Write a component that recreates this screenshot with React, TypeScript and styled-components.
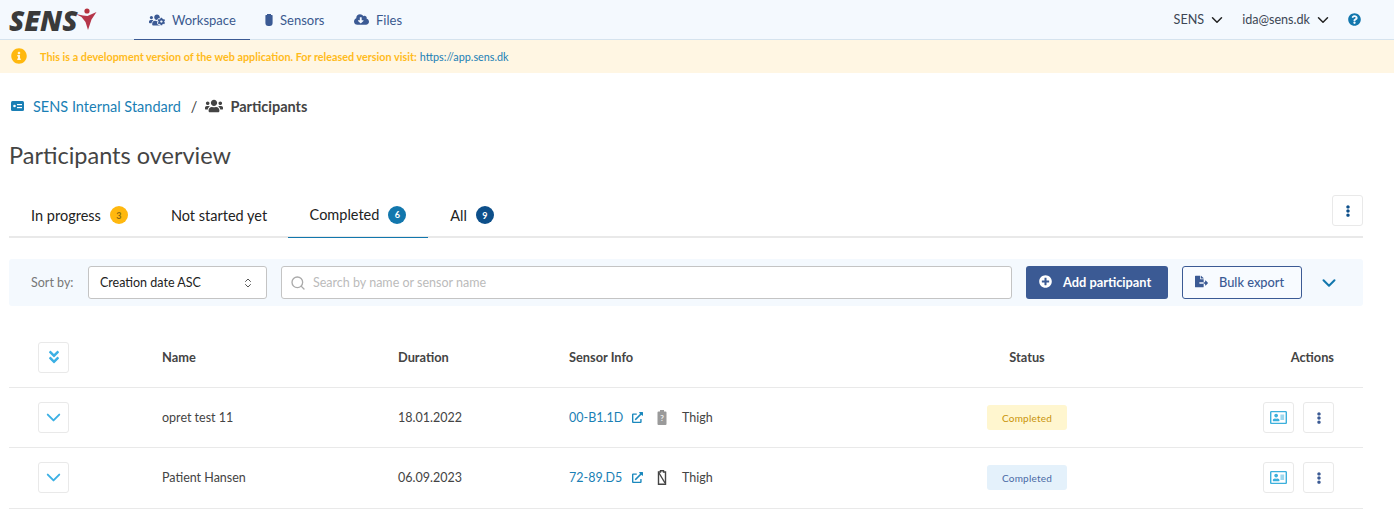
import React from 'react';
import styled, { createGlobalStyle } from 'styled-components';
import {
  FaUsersCog, FaCloudDownloadAlt, FaInfoCircle, FaQuestionCircle, FaUsers,
  FaEllipsisV, FaPlusCircle, FaFileExport, FaExternalLinkAlt, FaAngleDoubleDown, FaRegAddressCard,
} from 'react-icons/fa';
import { LuChevronDown, LuChevronsUpDown, LuSearch } from 'react-icons/lu';

const GlobalStyle = createGlobalStyle`
  body {
    margin: 0;
    background: #fff;
    font-family: Lato, "Open Sans", sans-serif;
    color: #3c4043;
  }
`;

const Header = styled.header`
  height: 40px;
  box-sizing: border-box;
  background: #f4f9fe;
  border-bottom: 1px solid #d5e3ee;
  display: flex;
  align-items: stretch;
`;
const Logo = styled.div`
  width: 134px;
  padding-left: 9px;
  display: flex;
  align-items: center;
  box-sizing: border-box;
`;
const LogoText = styled.span`
  font-family: "Open Sans", sans-serif;
  font-weight: 800;
  font-style: italic;
  font-size: 28px;
  letter-spacing: 0;
  color: #3a3a3a;
  line-height: 1;
`;
const Nav = styled.nav`
  display: flex;
  flex: 1;
`;
const NavItem = styled.a<{ $active?: boolean; $w: number }>`
  width: ${p => p.$w}px;
  display: flex;
  align-items: center;
  padding-left: 15px;
  box-sizing: border-box;
  gap: 7px;
  font-size: 13px;
  color: #3b5a8f;
  border-bottom: ${p => (p.$active ? '1px solid #3b5a94' : '1px solid transparent')};
  margin-bottom: -1px;
  svg { color: #3b5a94; }
`;
const HeaderRight = styled.div`
  display: flex;
  align-items: center;
  padding-right: 33px;
  font-size: 12.6px;
  color: #3c4654;
`;
const Menu = styled.span<{ $gap: number }>`
  display: flex;
  align-items: center;
  gap: 4px;
  margin-right: ${p => p.$gap}px;
  svg { color: #222; }
`;
const Banner = styled.div`
  height: 33px;
  box-sizing: border-box;
  padding: 0 0 1px 11px;
  background: #fff6e3;
  display: flex;
  align-items: center;
  font-size: 10.8px;
  color: #ffbb1c;
  font-weight: 700;
  svg { color: #ffb80f; margin-right: 13px; }
  a { color: #1a7fb5; margin-left: 3px; font-weight: 400; font-size: 10.8px; }
`;
const Main = styled.main`
  padding: 0 31px 0 9px;
`;
const Breadcrumb = styled.div`
  height: 20px;
  margin-top: 23px;
  display: flex;
  align-items: center;
  font-size: 14.5px;
  padding-left: 2px;
`;
const CrumbLink = styled.a`
  color: #1a7fb5;
  display: flex;
  align-items: center;
  gap: 9px;
`;
const CrumbSep = styled.span`
  margin: 0 8px 0 10px;
  color: #444;
`;
const CrumbCurrent = styled.span`
  display: flex;
  align-items: center;
  gap: 7px;
  font-weight: 700;
  color: #444;
  font-size: 14.5px;
`;
const Title = styled.h1`
  margin: 24px 0 0;
  font-size: 23.5px;
  line-height: 30px;
  font-weight: 400;
  color: #444;
`;
const TabsRow = styled.div`
  margin-top: 25px;
  height: 43px;
  box-sizing: border-box;
  border-bottom: 2px solid #e9e9e9;
  display: flex;
  justify-content: space-between;
`;
const Tabs = styled.div`
  display: flex;
`;
const Tab = styled.div<{ $active?: boolean; $w: number }>`
  width: ${p => p.$w}px;
  height: 43px;
  box-sizing: border-box;
  display: flex;
  align-items: center;
  justify-content: center;
  gap: 9px;
  padding-bottom: 3px;
  font-size: 14.5px;
  color: #222;
  border-bottom: ${p => (p.$active ? '1px solid #1277ad' : 'none')};
`;
const Count = styled.span<{ $bg: string; $fg: string }>`
  width: 18px;
  height: 18px;
  border-radius: 50%;
  background: ${p => p.$bg};
  color: ${p => p.$fg};
  font-size: 9px;
  font-weight: 700;
  display: flex;
  align-items: center;
  justify-content: center;
`;
const IconButton = styled.button<{ $color: string }>`
  width: 31px;
  height: 31px;
  padding: 0;
  background: #fff;
  border: 1px solid #e9e9e9;
  border-radius: 3px;
  color: ${p => p.$color};
  display: flex;
  align-items: center;
  justify-content: center;
`;
const Toolbar = styled.div`
  margin-top: 21px;
  height: 47px;
  background: #f4f9fe;
  border-radius: 3px;
  display: flex;
  align-items: center;
  padding-left: 22px;
`;
const SortLabel = styled.span`
  width: 57px;
  font-size: 12.5px;
  color: #777;
`;
const SortSelect = styled.div`
  width: 179px;
  height: 33px;
  box-sizing: border-box;
  background: #fff;
  border: 1px solid #c4c4c4;
  border-radius: 3px;
  display: flex;
  align-items: center;
  justify-content: space-between;
  padding: 0 12px 0 11px;
  font-size: 12.5px;
  color: #222;
  svg { color: #555; }
`;
const Search = styled.div`
  width: 731px;
  height: 33px;
  margin-left: 14px;
  box-sizing: border-box;
  background: #fff;
  border: 1px solid #c4c4c4;
  border-radius: 3px;
  display: flex;
  align-items: center;
  gap: 7px;
  padding-left: 8px;
  font-size: 12.5px;
  color: #bbb;
  svg { color: #aaa; }
`;
const PrimaryButton = styled.button`
  width: 142px;
  height: 33px;
  margin-left: 14px;
  padding: 0 0 2px 13px;
  background: #3b5a94;
  border: 0;
  border-radius: 3px;
  color: #fff;
  font: 700 12.8px Lato, sans-serif;
  display: flex;
  align-items: center;
  gap: 11px;
`;
const OutlineButton = styled.button`
  width: 120px;
  height: 33px;
  margin-left: 14px;
  padding: 0 0 2px 12px;
  background: #f8fbff;
  border: 1px solid #3b5a94;
  border-radius: 3px;
  color: #3b5a94;
  font: 500 12.8px Lato, sans-serif;
  display: flex;
  align-items: center;
  gap: 11px;
`;
const Expand = styled.span`
  margin-left: 16px;
  display: flex;
  color: #1277ad;
`;
const Row = styled.div<{ $h: number }>`
  height: ${p => p.$h}px;
  box-sizing: border-box;
  border-bottom: 1px solid #e9e9e9;
  display: grid;
  grid-template-columns: 153px 236px 171px 418px 80px 1fr;
  align-items: center;
  font-size: 12.5px;
  color: #444;
`;
const BodyRow = styled(Row)`
  &:last-child {
    padding-bottom: 1px;
  }
`;
const HeadRow = styled(Row)`
  margin-top: 21px;
  font-weight: 700;
  font-size: 12.8px;
  color: #444;
`;
const ToggleCell = styled.div`
  padding-left: 29px;
`;
const StatusHead = styled.div`
  text-align: center;
`;
const ActionsHead = styled.div`
  text-align: right;
  padding-right: 29px;
`;
const ActionsCell = styled.div`
  display: flex;
  justify-content: flex-end;
  gap: 9px;
  padding-right: 29px;
`;
const SensorCell = styled.div`
  display: flex;
  align-items: center;
`;
const SensorLink = styled.a`
  color: #1a7fb5;
  width: 63px;
`;
const External = styled.span`
  display: flex;
  color: #1a88bd;
  width: 25px;
`;
const Place = styled.span`
  margin-left: 15px;
`;
const Pill = styled.div<{ $bg: string; $fg: string }>`
  height: 25px;
  border-radius: 3px;
  background: ${p => p.$bg};
  color: ${p => p.$fg};
  font-size: 10px;
  letter-spacing: 0.2px;
  display: flex;
  align-items: center;
  justify-content: center;
`;

const SensorIcon = () => (
  <svg width="8" height="12" viewBox="0 0 8 12" fill="#3b5a94">
    <path d="M2 0h4v1h1a.6.6 0 0 1 .6.6V9a3 3 0 0 1-3 3h-1.200a3 3 0 0 1-3-3V1.600A.6.6 0 0 1 1 1h1z" />
  </svg>
);

const LogoMark = () => (
  <svg width="21" height="22" viewBox="0 0 21 22" style={{ marginLeft: -2, marginTop: -2 }}>
    <circle cx="11" cy="3" r="2.6" fill="#b5323f" />
    <path d="M0 6l7 1.500 4.500.5L20.500 4l-5 7.500L12 22l-2.500-8-4-5z" fill="#b5364a" />
  </svg>
);

const StudyIcon = () => (
  <svg width="13" height="10" viewBox="0 0 13 10">
    <rect width="13" height="10" rx="1.500" fill="#1a7fb5" />
    <circle cx="3.500" cy="5" r="1.300" fill="#fff" />
    <rect x="6" y="3" width="5" height="1.200" fill="#fff" />
    <rect x="6" y="6" width="5" height="1.200" fill="#fff" />
  </svg>
);

const UnknownBattery = () => (
  <svg width="10" height="15" viewBox="0 0 10 15">
    <path d="M3 0h4v1.500h1.500a1 1 0 0 1 1 1V14a1 1 0 0 1-1 1h-7a1 1 0 0 1-1-1V2.500a1 1 0 0 1 1-1H3z" fill="#9a9a9a" />
    <text x="5" y="11" fontSize="8" fontWeight="700" textAnchor="middle" fill="#eee" fontFamily="Lato">?</text>
  </svg>
);

const EmptyBattery = () => (
  <svg width="10" height="15" viewBox="0 0 10 15" fill="none" stroke="#444" strokeWidth="1.400">
    <path d="M3.500.7h3v1.300h2v12.300h-7V2h2z" />
    <path d="M2 3l6 10" />
  </svg>
);

const rows = [
  { name: 'opret test 11', date: '18.01.2022', sensor: '00-B1.1D', battery: <UnknownBattery />, bg: '#fff6cf', fg: '#c9940a' },
  { name: 'Patient Hansen', date: '06.09.2023', sensor: '72-89.D5', battery: <EmptyBattery />, bg: '#e4f1fb', fg: '#4a6aa5' },
];

export default function App() {
  return (
    <>
      <GlobalStyle />
      <Header>
        <Logo>
          <LogoText>SENS</LogoText>
          <LogoMark />
        </Logo>
        <Nav>
          <NavItem $active $w={116}><FaUsersCog size={16} />Workspace</NavItem>
          <NavItem $w={89}><SensorIcon />Sensors</NavItem>
          <NavItem $w={80}><FaCloudDownloadAlt size={15} />Files</NavItem>
        </Nav>
        <HeaderRight>
          <Menu $gap={16}>SENS <LuChevronDown size={18} strokeWidth={2} /></Menu>
          <Menu $gap={16}>ida@sens.dk <LuChevronDown size={18} strokeWidth={2} /></Menu>
          <FaQuestionCircle size={13} color="#1277ad" />
        </HeaderRight>
      </Header>
      <Banner>
        <FaInfoCircle size={16} />
        This is a development version of the web application. For released version visit:
        <a>https://app.sens.dk</a>
      </Banner>
      <Main>
        <Breadcrumb>
          <CrumbLink><StudyIcon />SENS Internal Standard</CrumbLink>
          <CrumbSep>/</CrumbSep>
          <CrumbCurrent><FaUsers size={18} />Participants</CrumbCurrent>
        </Breadcrumb>
        <Title>Participants overview</Title>
        <TabsRow>
          <Tabs>
            <Tab $w={141}>In progress <Count $bg="#ffb80f" $fg="#8a6a10">3</Count></Tab>
            <Tab $w={138}>Not started yet</Tab>
            <Tab $active $w={140}>Completed <Count $bg="#1277ad" $fg="#fff">6</Count></Tab>
            <Tab $w={88}>All <Count $bg="#0d4f8a" $fg="#fff">9</Count></Tab>
          </Tabs>
          <IconButton $color="#0d4f8a"><FaEllipsisV size={12} /></IconButton>
        </TabsRow>
        <Toolbar>
          <SortLabel>Sort by:</SortLabel>
          <SortSelect>Creation date ASC <LuChevronsUpDown size={12} /></SortSelect>
          <Search><LuSearch size={16} />Search by name or sensor name</Search>
          <PrimaryButton><FaPlusCircle size={13} />Add participant</PrimaryButton>
          <OutlineButton><FaFileExport size={13} />Bulk export</OutlineButton>
          <Expand><LuChevronDown size={22} strokeWidth={2.2} /></Expand>
        </Toolbar>
        <HeadRow $h={61}>
          <ToggleCell><IconButton $color="#3cb0e4"><FaAngleDoubleDown size={16} /></IconButton></ToggleCell>
          <div>Name</div>
          <div>Duration</div>
          <div>Sensor Info</div>
          <StatusHead>Status</StatusHead>
          <ActionsHead>Actions</ActionsHead>
        </HeadRow>
        {rows.map((r, i) => (
          <BodyRow key={r.name} $h={i === 0 ? 60 : 61}>
            <ToggleCell><IconButton $color="#3cb0e4"><LuChevronDown size={23} strokeWidth={2} /></IconButton></ToggleCell>
            <div>{r.name}</div>
            <div>{r.date}</div>
            <SensorCell>
              <SensorLink>{r.sensor}</SensorLink>
              <External><FaExternalLinkAlt size={11} /></External>
              {r.battery}
              <Place>Thigh</Place>
            </SensorCell>
            <Pill $bg={r.bg} $fg={r.fg}>Completed</Pill>
            <ActionsCell>
              <IconButton $color="#3cb0dc"><FaRegAddressCard size={17} /></IconButton>
              <IconButton $color="#3b5a94"><FaEllipsisV size={12} /></IconButton>
            </ActionsCell>
          </BodyRow>
        ))}
      </Main>
    </>
  );
}
